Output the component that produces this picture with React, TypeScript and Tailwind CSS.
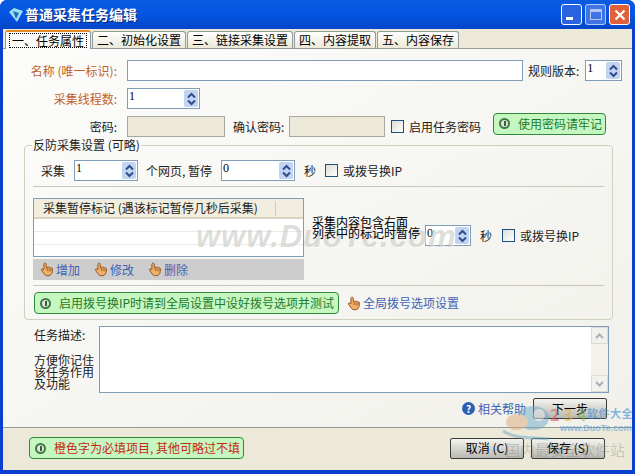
import React from "react";

const cjk = "font-['Noto_Sans_CJK_SC','Liberation_Sans',sans-serif]";

// spin edit with the xp style up/down button
const Spin = ({ value, className }: { value: string; className: string }) => (
  <div className={`flex h-[21px] items-start justify-between border border-[#7f9db9] bg-white pl-[1px] pr-[1px] pt-[1px] ${className}`}>
    <span className="font-['Liberation_Serif',serif] text-[12px] leading-[13px] text-black">{value}</span>
    <div className="flex h-[17px] w-[14px] flex-col items-center justify-center rounded-[2px] bg-[#c3d3f2] text-[#34538f]">
      <svg width="9" height="14" viewBox="0 0 9 14">
        <path d="M1 5.5 L4.5 2 L8 5.5" fill="none" stroke="#2f4f8c" strokeWidth="2" />
        <path d="M1 8.5 L4.5 12 L8 8.5" fill="none" stroke="#2f4f8c" strokeWidth="2" />
      </svg>
    </div>
  </div>
);

const Check = () => (
  <div className="h-[13px] w-[13px] shrink-0 border border-[#1c5180] bg-gradient-to-br from-[#dcdcd7] to-white" />
);

const Hand = () => (
  <svg width="15" height="15" viewBox="0 0 15 15" className="shrink-0">
    <path
      d="M5 1.2c1 0 1.3.7 1.3 1.5v3l1-.2c.5-.7 1.4-.5 1.7 0 .6-.4 1.4-.2 1.7.3.8-.2 1.6.3 1.7 1.1.1 1.7 0 3.400-.9 4.800-.5 1-1.300 1.700-2.500 2H6.600c-1.300-.3-2.200-1.300-3-2.500L1.500 8.200c-.5-.8.4-1.700 1.200-1.300l1.200.8V2.700C3.900 1.900 4.300 1.200 5 1.200Z"
      fill="#efb06a"
      stroke="#8a4a17"
      strokeWidth="0.9"
    />
    <path d="M7.300 6v3M9.100 6.200v3M10.900 6.500v3" stroke="#8a4a17" strokeWidth="0.7" />
  </svg>
);

const Tip = ({ text, className, red }: { text: string; className: string; red?: boolean }) => (
  <div className={`flex h-[22px] items-center gap-[8px] rounded-[4px] border border-[#2f8a3a] bg-[#c6f7c0] pl-[5px] ${className}`}>
    <div className="flex h-[11px] w-[11px] shrink-0 items-center justify-center rounded-full border-[2px] border-[#3d7a45] bg-[#dfe8d8]">
      <div className="h-[5px] w-[2px] bg-[#3d5a40]" />
    </div>
    <span className={`whitespace-nowrap text-[12px] leading-none ${red ? "text-[#c8281a]" : "text-[#1f7a2c]"}`}>{text}</span>
  </div>
);

const Btn = ({ text, className }: { text: string; className?: string }) => (
  <div className={`flex h-[21px] w-[74px] items-center justify-center rounded-[2px] border border-[#3c3c3c] bg-gradient-to-b from-[#f4f4f0] to-[#b9b8b2] text-[12px] text-black ${className ?? ""}`}>
    {text}
  </div>
);

const Tab = ({ text, active }: { text: string; active?: boolean }) =>
  active ? (
    <div className="z-10 -mb-[1px] flex h-[19px] w-[86px] items-center justify-center rounded-t-[3px] border-x border-t-[2px] border-x-[#919b9c] border-t-[#e68b2c] bg-[#fcfcfa] text-[12px] text-black">
      <span className="border border-dotted border-black px-[2px] leading-[13px]">{text}</span>
    </div>
  ) : (
    <div className="flex h-[17px] items-center justify-center rounded-t-[3px] border-x border-t border-[#919b9c] bg-gradient-to-b from-white to-[#ece9d8] px-[4px] text-[12px] text-black">
      {text}
    </div>
  );

const Rule = () => <div className="h-[1px] bg-[#c9c7ba]" />;

export default function App() {
  return (
    <div className={`relative flex h-[474px] w-[635px] flex-col overflow-hidden rounded-t-[7px] bg-[#0a3fd0] ${cjk}`}>
      {/* title bar */}
      <div className="flex h-[29px] shrink-0 items-center bg-gradient-to-b from-[#0a5ce0] via-[#0554e3] to-[#0346c8] pl-[8px] pr-[5px]">
        <svg width="16" height="16" viewBox="0 0 16 16">
          <path d="M1 5 L6 1 L15 4 L9 15 Z" fill="#9fe0f0" />
          <path d="M5 4 L11 6 L8 12 Z" fill="#1b70c0" />
        </svg>
        <span className="ml-[1px] text-[14px] font-bold text-white [text-shadow:1px_1px_0_#0a2a80]">普通采集任务编辑</span>
        <div className="ml-auto flex gap-[3px]">
          <div className="flex h-[21px] w-[21px] items-end rounded-[3px] border border-white bg-[#2a63e0] pb-[4px] pl-[4px]">
            <div className="h-[3px] w-[7px] bg-white" />
          </div>
          <div className="flex h-[21px] w-[21px] items-center justify-center rounded-[3px] border border-white/60 bg-[#3f74e6]">
            <div className="h-[11px] w-[12px] border border-t-[3px] border-white/60" />
          </div>
          <div className="flex h-[21px] w-[21px] items-center justify-center rounded-[3px] border border-white bg-[#e0603a]">
            <svg width="12" height="12" viewBox="0 0 12 12">
              <path d="M1.500 1.500 L10.500 10.500 M10.500 1.500 L1.500 10.500" stroke="white" strokeWidth="2.200" />
            </svg>
          </div>
        </div>
      </div>

      {/* client area */}
      <div className="mx-[3px] flex min-h-0 flex-1 flex-col bg-[#ece9d8]">
        <div className="flex h-[19px] shrink-0 items-end gap-[1px] pl-[2px]">
          <Tab text="一、任务属性" active />
          <Tab text="二、初始化设置" />
          <Tab text="三、链接采集设置" />
          <Tab text="四、内容提取" />
          <Tab text="五、内容保存" />
        </div>

        <div className="h-[380px] shrink-0 border-y border-[#919b9c] bg-gradient-to-br from-[#fcfcfb] to-[#f1f0ea] text-[12px] text-[#222]">
          {/* name */}
          <div className="mt-[11px] flex h-[21px] items-center">
            <span className="w-[114px] whitespace-nowrap text-right text-[#c0622c]">名称 (唯一标识):</span>
            <div className="ml-[10px] h-[21px] w-[396px] border border-[#7f9db9] bg-white" />
            <span className="ml-[5px] whitespace-nowrap">规则版本:</span>
            <Spin value="1" className="ml-[6px] w-[37px]" />
          </div>
          {/* threads */}
          <div className="mt-[7px] flex h-[21px] items-center">
            <span className="w-[114px] whitespace-nowrap text-right text-[#c0622c]">采集线程数:</span>
            <Spin value="1" className="ml-[10px] w-[73px]" />
          </div>
          {/* password */}
          <div className="mt-[7px] flex h-[21px] items-center">
            <span className="w-[114px] text-right">密码:</span>
            <div className="ml-[10px] h-[21px] w-[98px] border border-[#a5aaa0] bg-[#ece9d8]" />
            <span className="ml-[8px] w-[56px] whitespace-nowrap">确认密码:</span>
            <div className="h-[21px] w-[96px] border border-[#a5aaa0] bg-[#ece9d8]" />
            <div className="ml-[6px]"><Check /></div>
            <span className="ml-[5px] whitespace-nowrap">启用任务密码</span>
            <Tip text="使用密码请牢记" className="ml-[12px] -mt-[6px] w-[113px]" />
          </div>

          {/* anti collection group */}
          <div className="relative ml-[21px] mt-[8px] h-[175px] w-[589px] rounded-[4px] border border-[#d0d0bf] px-[8px]">
            <span className="absolute -top-[9px] left-[7px] bg-[#f8f8f5] px-[1px] leading-[16px]">反防采集设置 (可略)</span>
            <div className="mt-[14px] flex h-[21px] items-center">
              <span className="ml-[8px] w-[33px] whitespace-nowrap">采集</span>
              <Spin value="1" className="w-[64px]" />
              <span className="ml-[8px] w-[75px] whitespace-nowrap">个网页, 暂停</span>
              <Spin value="0" className="w-[74px]" />
              <span className="ml-[9px] w-[21px]">秒</span>
              <Check />
              <span className="ml-[5px] whitespace-nowrap">或拨号换IP</span>
            </div>
            <div className="mt-[5px]"><Rule /></div>

            <div className="mt-[11px] flex h-[81px]">
              <div className="w-[271px] shrink-0">
                <div className="h-[59px] border border-[#7f9db9] bg-white">
                  <div className="flex h-[20px] items-center border-b-2 border-[#d8d4c0] bg-[#f1eee0] pl-[9px]">
                    <span className="w-[232px] whitespace-nowrap">采集暂停标记 (遇该标记暂停几秒后采集)</span>
                    <div className="h-[15px] w-[1px] bg-[#cfcbb8]" />
                  </div>
                  <div className="h-[13px] border-b border-[#ecebe3]" />
                  <div className="h-[13px] border-b border-[#ecebe3]" />
                </div>
                <div className="mt-[2px] flex h-[21px] items-center gap-[14px] bg-[#cdcdcd] pl-[7px] text-[#3f63b4]">
                  <div className="flex items-center gap-[1px]"><Hand />增加</div>
                  <div className="flex items-center gap-[1px]"><Hand />修改</div>
                  <div className="flex items-center gap-[1px]"><Hand />删除</div>
                </div>
              </div>
              <div className="ml-[8px] mt-[18px] flex items-start">
                <div className="relative z-20 w-[113px] leading-[11px] text-black">
                  <div className="whitespace-nowrap">采集内容包含右面</div>
                  <div className="whitespace-nowrap">列表中的标记时暂停</div>
                </div>
                <div className="mt-[9px] flex h-[21px] items-center">
                  <Spin value="0" className="w-[46px]" />
                  <span className="ml-[9px] w-[22px]">秒</span>
                  <Check />
                  <span className="ml-[5px] whitespace-nowrap">或拨号换IP</span>
                </div>
              </div>
            </div>

            <div className="mt-[6px]"><Rule /></div>
            <div className="mt-[6px] flex items-center">
              <Tip text="启用拨号换IP时请到全局设置中设好拨号选项并测试" className="ml-[1px] w-[305px]" />
              <div className="ml-[8px] flex items-center gap-[1px] text-[#3f63b4]"><Hand />全局拨号选项设置</div>
            </div>
          </div>

          {/* description */}
          <div className="mt-[6px] flex">
            <div className="ml-[31px] w-[65px] leading-[12px]">
              <div className="mt-[3px]">任务描述:</div>
              <div className="mt-[13px] whitespace-nowrap">方便你记住</div>
              <div className="whitespace-nowrap">该任务作用</div>
              <div>及功能</div>
            </div>
            <div className="flex h-[67px] w-[510px] justify-end border border-[#7f9db9] bg-white">
              <div className="flex w-[17px] flex-col justify-between bg-[#f2f1ec] text-[#b0b4c0]">
                <div className="flex h-[17px] items-center justify-center border border-[#dcdcd4]">
                  <svg width="9" height="6" viewBox="0 0 9 6"><path d="M1 5 L4.500 1.500 L8 5" fill="none" stroke="#a9aeb8" strokeWidth="2" /></svg>
                </div>
                <div className="flex h-[17px] items-center justify-center border border-[#dcdcd4]">
                  <svg width="9" height="6" viewBox="0 0 9 6"><path d="M1 1 L4.500 4.500 L8 1" fill="none" stroke="#a9aeb8" strokeWidth="2" /></svg>
                </div>
              </div>
            </div>
          </div>

          {/* help + next */}
          <div className="mt-[5px] flex h-[21px] items-center">
            <div className="ml-[459px] flex h-[13px] w-[13px] items-center justify-center rounded-full bg-[#2a5fb5] text-[10px] font-bold leading-none text-white">?</div>
            <span className="ml-[3px] w-[55px] whitespace-nowrap text-[#3f63b4]">相关帮助</span>
            <Btn text="下一步" />
          </div>
        </div>

        {/* footer */}
        <div className="flex flex-1 items-center pb-[2px]">
          <Tip text="橙色字为必填项目, 其他可略过不填" red className="ml-[26px] w-[215px]" />
          <Btn text="取消 (C)" className="ml-[206px]" />
          <Btn text="保存 (S)" className="ml-[7px]" />
        </div>
      </div>
      <div className="h-[4px] shrink-0 bg-[#0a3fd0]" />

      {/* watermarks */}
      <span className="pointer-events-none absolute left-[196px] top-[214px] font-['Liberation_Sans',sans-serif] text-[31px] font-bold italic tracking-[1px] text-[#b4b4ae]/45 [text-shadow:1px_1px_0_#ffffff80]">
        www.DuoTe.com
      </span>
      <div className="pointer-events-none absolute left-[495px] top-[403px] h-[60px] w-[140px]">
        <svg width="60" height="36" viewBox="0 0 60 36" className="absolute left-[2px] top-[2px] opacity-50">
          <ellipse cx="36" cy="13" rx="16" ry="12" fill="#6fa8c8" />
          <circle cx="42" cy="10" r="6" fill="#e4e8ee" />
          <ellipse cx="20" cy="17" rx="11" ry="8" fill="#d9a878" />
          <path d="M6 26 C18 34 34 32 52 34" fill="none" stroke="#6fa8c8" strokeWidth="3" />
        </svg>
        <span className="absolute left-[55px] top-[3px] whitespace-nowrap text-[16px] font-bold leading-none">
          <span className="text-[#d85a5a]/60">2</span>
          <span className="ml-[4px] text-[#e0b040]/60">3</span>
          <span className="ml-[4px] text-[#7fb05a]/60">4</span>
        </span>
        <span className="absolute left-[92px] top-[2px] whitespace-nowrap text-[11px] font-bold leading-[16px] tracking-[0.5px] text-[#4f9ad8]/70">软件大全</span>
        <span className="absolute left-[65px] top-[21px] font-['Liberation_Sans',sans-serif] text-[9px] font-bold leading-none text-[#4f9ad8]/60">www.DuoTe.com</span>
        <span className="absolute left-[10px] top-[39px] whitespace-nowrap text-[15px] leading-none text-[#8a8a84]/40">国内最安全软件站</span>
      </div>
    </div>
  );
}
